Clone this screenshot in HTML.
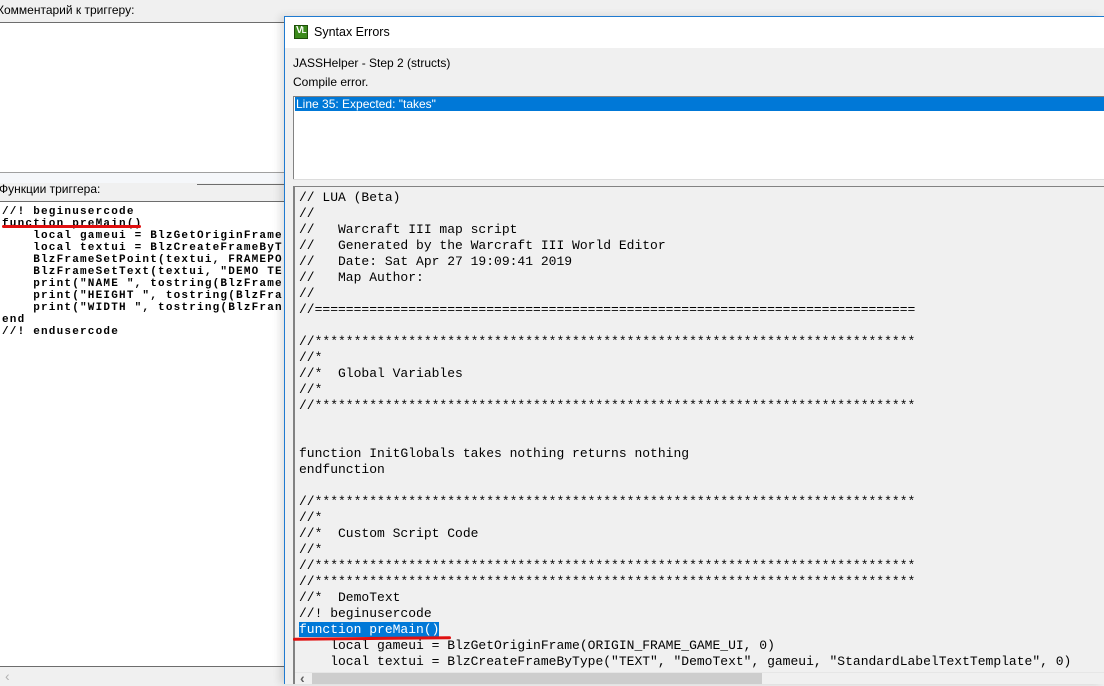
<!DOCTYPE html>
<html><head><meta charset="utf-8"><style>
*{margin:0;padding:0;box-sizing:border-box}
body{width:1104px;height:684px;overflow:hidden;background:#f0f0f0;position:relative;font-family:"Liberation Sans",sans-serif;font-size:12px;color:#000}
.a{position:absolute}
.ui{font-family:"Liberation Sans","DejaVu Sans",sans-serif;font-size:12px;white-space:nowrap}
pre{font-family:"Liberation Mono",monospace;margin:0}
#lc{left:2px;top:206px;font-size:11px;font-weight:bold;line-height:12px;letter-spacing:1.2px;color:#000}
#rc{left:299px;top:190px;font-size:13px;line-height:16px;color:#000}
.hl{background:#0078d7;color:#fff}
</style></head><body>
<!-- left panel -->
<div class="a ui" style="left:-3px;top:3px">Комментарий к триггеру:</div>
<div class="a" style="left:0;top:22px;width:290px;height:1px;background:#6d6d6d"></div>
<div class="a" style="left:0;top:23px;width:290px;height:149px;background:#fff"></div>
<div class="a" style="left:0;top:172px;width:290px;height:1px;background:#a0a0a0"></div>
<div class="a" style="left:0;top:173px;width:290px;height:10px;background:#f5f7fa"></div>
<div class="a" style="left:197px;top:184px;width:90px;height:1px;background:#6d6d6d"></div>
<div class="a ui" style="left:-1px;top:182px">Функции триггера:</div>
<div class="a" style="left:0;top:201px;width:290px;height:1px;background:#6d6d6d"></div>
<div class="a" style="left:0;top:202px;width:290px;height:464px;background:#fff"></div>
<div class="a" style="left:0;top:666px;width:290px;height:1px;background:#6d6d6d"></div>
<div class="a" style="left:5px;top:668px;color:#b0b0b0;font-size:14px">&lsaquo;</div>
<pre class="a" id="lc">//! beginusercode
function preMain()
    local gameui = BlzGetOriginFrame
    local textui = BlzCreateFrameByT
    BlzFrameSetPoint(textui, FRAMEPO
    BlzFrameSetText(textui, "DEMO TE
    print("NAME ", tostring(BlzFrame
    print("HEIGHT ", tostring(BlzFra
    print("WIDTH ", tostring(BlzFran
end
//! endusercode</pre>
<div class="a" style="left:2px;top:225px;width:139px;height:3px;background:#e01010;border-radius:2px"></div>

<!-- dialog -->
<div class="a" style="left:284px;top:16px;width:820px;height:668px;background:#f0f0f0;border-left:1px solid #1f7ad0;border-top:1px solid #1f7ad0;box-shadow:-4px 0 8px rgba(0,0,0,.12)"></div>
<div class="a" style="left:285px;top:17px;width:819px;height:31px;background:#fff"></div>
<div class="a" style="left:294px;top:25px;width:14px;height:14px;background:#3c8a1c;border:1px solid #1d4d0a"></div>
<div class="a" style="left:296px;top:25px;color:#fff;font-size:10px;font-weight:bold;letter-spacing:-1px">V<span style="font-size:8px">L</span></div>
<div class="a ui" style="left:314px;top:25px;font-size:12.5px">Syntax Errors</div>
<div class="a ui" style="left:293px;top:56px">JASSHelper - Step 2 (structs)</div>
<div class="a ui" style="left:293px;top:75px">Compile error.</div>
<div class="a" style="left:293px;top:96px;width:811px;height:84px;background:#fff;border-top:1px solid #828282;border-left:1px solid #828282"></div>
<div class="a ui" style="left:295px;top:97px;width:809px;height:14px;background:#0078d7;color:#fff;padding-left:1px;line-height:14px">Line 35: Expected: "takes"</div>
<div class="a" style="left:293px;top:179px;width:811px;height:1px;background:#dcdcdc"></div>
<div class="a" style="left:293px;top:186px;width:811px;height:498px;border-top:1px solid #828282;border-left:2px solid #828282"></div>
<pre class="a" id="rc">// LUA (Beta)
//
//   Warcraft III map script
//   Generated by the Warcraft III World Editor
//   Date: Sat Apr 27 19:09:41 2019
//   Map Author:
//
//=============================================================================

//*****************************************************************************
//*
//*  Global Variables
//*
//*****************************************************************************


function InitGlobals takes nothing returns nothing
endfunction

//*****************************************************************************
//*
//*  Custom Script Code
//*
//*****************************************************************************
//*****************************************************************************
//*  DemoText
//! beginusercode
<span class="hl">function preMain()</span>
    local gameui = BlzGetOriginFrame(ORIGIN_FRAME_GAME_UI, 0)
    local textui = BlzCreateFrameByType("TEXT", "DemoText", gameui, "StandardLabelTextTemplate", 0)</pre>
<div class="a" style="left:293px;top:637px;width:158px;height:3px;background:#e01010;border-radius:2px;transform:rotate(-0.6deg)"></div>
<div class="a" style="left:295px;top:672px;width:809px;height:1px;background:#e6e6e6"></div>
<div class="a" style="left:295px;top:673px;width:809px;height:11px;background:#f0f0f0"></div>
<div class="a" style="left:312px;top:673px;width:450px;height:11px;background:#cdcdcd"></div>
<div class="a" style="left:300px;top:670px;font-size:14px;font-weight:bold;color:#606060">&lsaquo;</div>
</body></html>
